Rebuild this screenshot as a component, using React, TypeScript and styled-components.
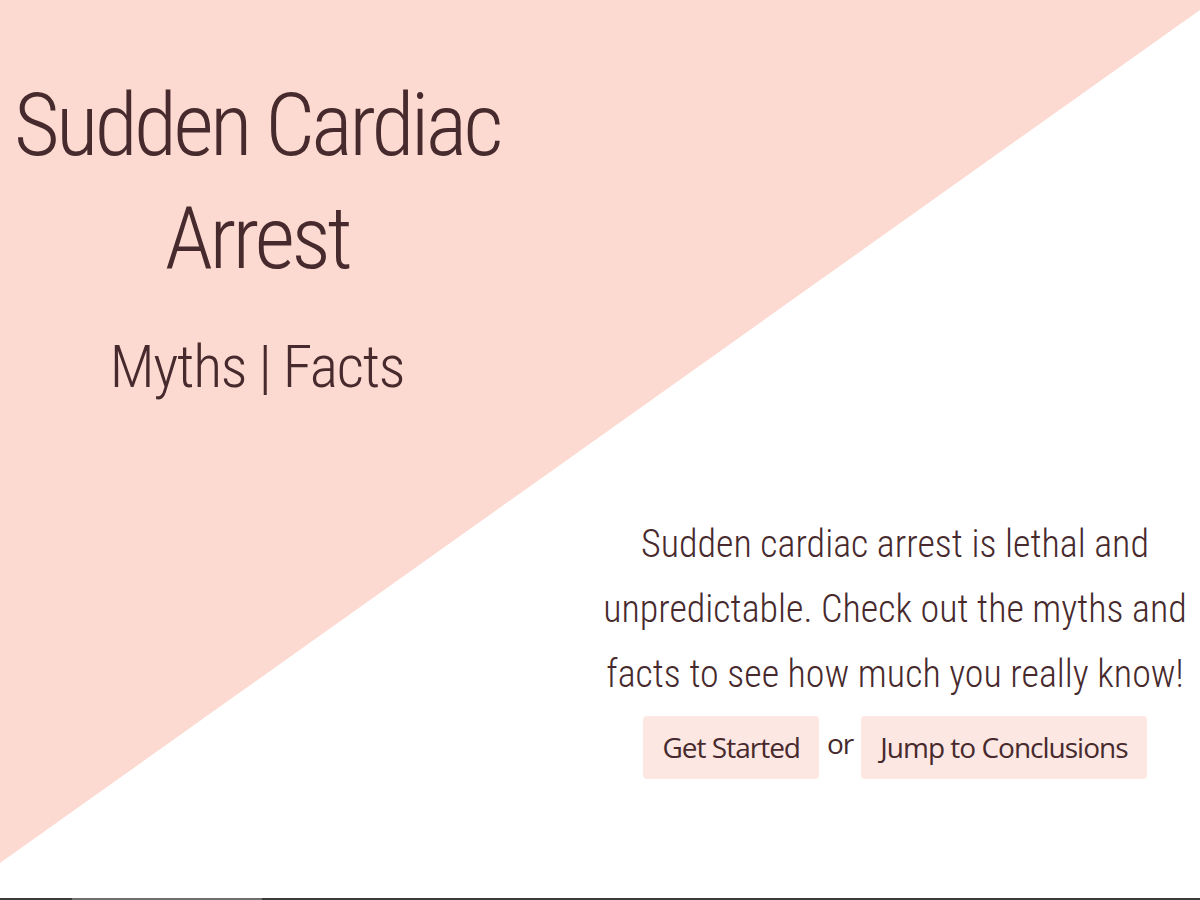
import React from "react";
import styled, { createGlobalStyle } from "styled-components";

const GlobalStyle = createGlobalStyle`
  html, body { margin: 0; padding: 0; background: #ffffff; }
  body { color: #472a2d; overflow: hidden; }
`;

const Page = styled.div`
  position: relative;
  width: 1200px;
  height: 900px;
  display: flex;
  flex-direction: column;
  overflow: hidden;
  &::before {
    content: "";
    position: absolute;
    inset: 0;
    background: #fddad1;
    clip-path: polygon(0 0, 1200px 0, 1200px 10px, 0 863px);
    z-index: 0;
  }
`;

const Hero = styled.main`
  position: relative;
  z-index: 1;
  flex: 1;
  display: grid;
  grid-template-columns: 514px 1fr;
`;

const Left = styled.section`
  text-align: center;
  padding-top: 68px;
`;

const Title = styled.h1`
  margin: 0;
  font-family: Roboto, "Liberation Sans Narrow", sans-serif;
  font-weight: 300;
  font-stretch: 75%;
  font-size: 88px;
  line-height: 113px;
  letter-spacing: -3.6px;
`;

const Subtitle = styled.h2`
  margin: 33px 0 0;
  font-family: Roboto, "Liberation Sans Narrow", sans-serif;
  font-weight: 300;
  font-stretch: 75%;
  font-size: 60px;
  line-height: 80px;
  letter-spacing: -1.3px;
`;

const Right = styled.section`
  padding: 512px 0 0 76px;
  display: flex;
  flex-direction: column;
  align-items: center;
`;

const Lead = styled.p`
  margin: 0;
  width: 600px;
  text-align: center;
  font-family: Roboto, "Liberation Sans Narrow", sans-serif;
  font-weight: 300;
  font-stretch: 75%;
  font-size: 38px;
  line-height: 65px;
  letter-spacing: 0;
`;

const Actions = styled.div`
  margin-top: 9px;
  display: flex;
  align-items: flex-start;
  gap: 8px;
`;

const Button = styled.a`
  display: block;
  height: 63px;
  padding: 0 19px;
  border-radius: 4px;
  background: #fde7e3;
  color: #472a2d;
  text-decoration: none;
  font-family: "Open Sans", sans-serif;
  font-size: 28px;
  letter-spacing: -1px;
  line-height: 63px;
  cursor: pointer;
`;

const Or = styled.span`
  font-family: "Open Sans", sans-serif;
  font-size: 28px;
  letter-spacing: -1px;
  line-height: 55px;
`;

const Track = styled.div`
  position: relative;
  z-index: 1;
  height: 2px;
  background: #3c3c3c;
  display: flex;
`;

const Thumb = styled.div`
  margin-left: 72px;
  width: 190px;
  background: #6f6f6f;
`;

export default function App() {
  return (
    <>
      <GlobalStyle />
      <Page>
        <Hero>
          <Left>
            <Title>
              Sudden Cardiac
              <br />
              Arrest
            </Title>
            <Subtitle>Myths | Facts</Subtitle>
          </Left>
          <Right>
            <Lead>
              Sudden cardiac arrest is lethal and unpredictable. Check out the
              myths and facts to see how much you really know!
            </Lead>
            <Actions>
              <Button>Get Started</Button>
              <Or>or</Or>
              <Button>Jump to Conclusions</Button>
            </Actions>
          </Right>
        </Hero>
        <Track>
          <Thumb />
        </Track>
      </Page>
    </>
  );
}
